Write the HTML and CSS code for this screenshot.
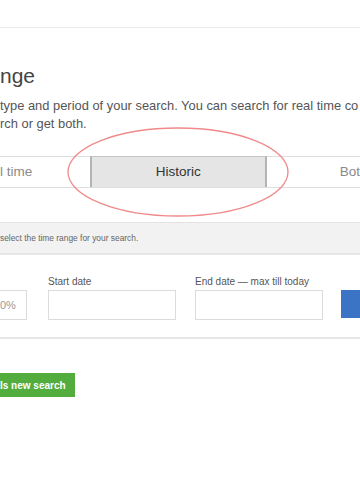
FILE: index.html
```html
<!DOCTYPE html>
<html lang="en">
<head>
    <meta charset="UTF-8">
    <meta name="viewport" content="width=device-width, initial-scale=1.0">
    <title>Time range</title>
    <link rel="stylesheet" href="styles.css">
</head>
<body>

    <div class="topbar"></div>

    <div class="panel">
        <h1 class="title">nge</h1>
        <p class="intro">type and period of your search. You can search for real time co<br>rch or get both.</p>

        <div class="tabs">
            <div class="tab tab-first">l time</div>
            <div class="tab tab-active">Historic</div>
            <div class="tab tab-last">Bot</div>
        </div>
    </div>

    <div class="notice">select the time range for your search.</div>

    <div class="form">
        <div class="field field-small">
            <input type="text" class="box" value="0%">
        </div>
        <div class="field">
            <label>Start date</label>
            <input type="text" class="box">
        </div>
        <div class="field">
            <label>End date — max till today</label>
            <input type="text" class="box">
        </div>
        <div class="field field-btn">
            <button class="go"></button>
        </div>
    </div>

    <button class="save">ls new search</button>

    <svg class="circle" width="360" height="240" viewBox="0 0 360 240">
        <ellipse cx="178" cy="172" rx="110" ry="44" fill="none" stroke="#f08a8a" stroke-width="1.3"/>
    </svg>

</body>
</html>
```

FILE: styles.css
```css
* {
  margin: 0;
  padding: 0;
  box-sizing: border-box;
}
body {
    font-family: "Liberation Sans", Arial, sans-serif;
    background-color: #fff;
    width: 360px;
    height: 500px;
    overflow: hidden;
    position: relative;
}
.topbar {
    height: 28px;
    border-bottom: 1px solid #ebebeb;
}
.title {
    margin-top: 36px;
    font-size: 21px;
    line-height: 24px;
    font-weight: normal;
    color: #444;
}
.intro {
    margin-top: 9px;
    font-size: 12.9px;
    line-height: 18px;
    color: #555;
    white-space: nowrap;
    overflow: hidden;
}
.tabs {
    margin-top: 23px;
    display: flex;
    height: 32px;
    border-top: 1px solid #dedede;
    border-bottom: 1px solid #dedede;
}
.tab {
    font-size: 13.5px;
    line-height: 30px;
    color: #8a8a8a;
}
.tab-first {
    width: 90px;
}
.tab-active {
    width: 177px;
    text-align: center;
    background: #e5e5e5;
    color: #333;
    border-left: 2px solid #b4b4b4;
    border-right: 2px solid #b4b4b4;
    border-top: 1px solid #c4c4c4;
    margin-top: -1px;
    line-height: 30px;
}
.tab-last {
    flex: 1;
    padding-left: 73px;
}
.notice {
    margin-top: 34px;
    height: 33px;
    background: #f2f2f2;
    border-top: 1px solid #e2e2e2;
    border-bottom: 2px solid #e6e6e6;
    font-size: 8.4px;
    line-height: 30px;
    color: #666;
}
.form {
    display: flex;
    align-items: flex-end;
    gap: 19px;
    padding: 21px 0 17px 0;
    border-bottom: 2px solid #e6e6e6;
}
.field {
    display: flex;
    flex-direction: column;
    gap: 2px;
    width: 128px;
    flex-shrink: 0;
}
.field label {
    font-size: 10px;
    line-height: 12px;
    color: #555;
    white-space: nowrap;
}
.field-small {
    width: 27px;
    margin-right: 2px;
}
.box {
    height: 30px;
    width: 100%;
    border: 1px solid #dcdcdc;
    font-family: inherit;
    font-size: 11px;
    color: #999;
    padding: 0 4px;
    background: #fff;
    outline: none;
}
.field-small .box {
    border-left: none;
    padding: 0;
}
.field-btn {
    width: 19px;
    margin-left: -1px;
    padding-bottom: 2px;
}
.go {
    height: 28px;
    width: 100%;
    border: none;
    background: #3b73c5;
}
.save {
    display: block;
    margin-top: 34px;
    width: 75px;
    height: 24px;
    border: none;
    background: #52ad3e;
    color: #fff;
    font-family: inherit;
    font-size: 10px;
    font-weight: bold;
    text-align: left;
    padding-left: 0;
}
.circle {
    position: absolute;
    left: 0;
    top: 0;
    pointer-events: none;
}
```
